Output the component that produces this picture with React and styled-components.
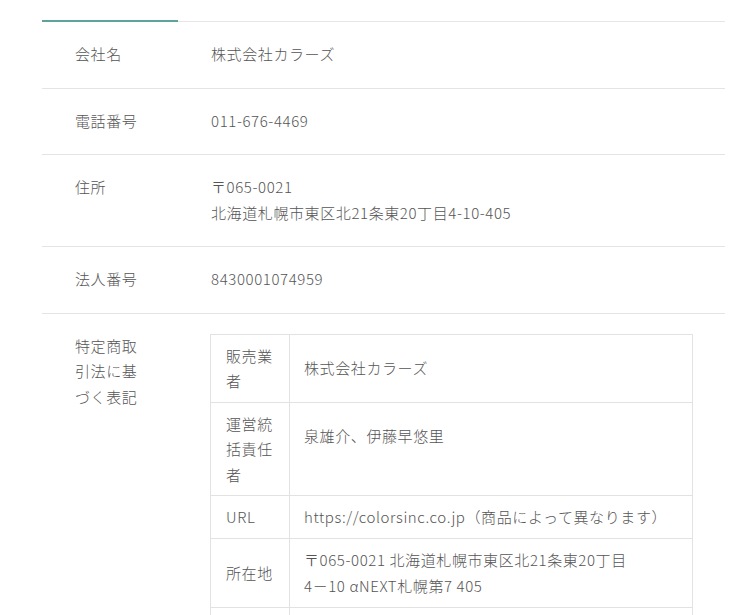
import React from "react";
import styled, { createGlobalStyle } from "styled-components";

const Global = createGlobalStyle`
  html, body { margin: 0; padding: 0; background: #fff; }
  body {
    font-family: "Noto Sans CJK JP", "Noto Sans", sans-serif;
    color: #555;
  }
`;

const Page = styled.div`
  padding: 20px 15px 0 42px;
  width: 683px;
`;

const TabLine = styled.div`
  display: flex;
  align-items: center;
  height: 2px;
`;

const Accent = styled.div`
  width: 136px;
  height: 2px;
  background: #5fa29a;
`;

const Rule = styled.div`
  flex: 1;
  height: 1px;
  background: #e6e6e6;
`;

const Row = styled.div`
  display: grid;
  grid-template-columns: 169px 1fr;
  border-bottom: 1px solid #e4e4e4;
  padding: 19px 0 21px;
  font-size: 15px;
  font-weight: 300;
  line-height: 25.5px;
  letter-spacing: 0.04em;
`;

const Label = styled.div`
  padding-left: 33px;
  width: 66px;
  color: #555;
`;

const Value = styled.div`
  color: #555;
  padding-right: 31px;
`;

const SubTable = styled.table`
  border-collapse: collapse;
  width: 100%;
  margin-left: -1px;
  margin-top: 1px;
  font-size: 15px;
  font-weight: 300;
  line-height: 25.5px;
  letter-spacing: 0.04em;
  color: #555;
`;

const SubHead = styled.th`
  font-weight: 300;
  text-align: left;
  width: 48px;
  padding: 8px 15px;
  border: 1px solid #e2e2e2;
  vertical-align: middle;
`;

const SubCell = styled.td`
  padding: 8px 14px 8.5px;
  border: 1px solid #e2e2e2;
  vertical-align: middle;
  white-space: ${(p) => (p.$nowrap ? "nowrap" : "normal")};
`;

const rows = [
  { label: "会社名", value: "株式会社カラーズ" },
  { label: "電話番号", value: "011-676-4469" },
  { label: "住所", value: ["〒065-0021", "北海道札幌市東区北21条東20丁目4-10-405"] },
  { label: "法人番号", value: "8430001074959" },
];

const sub = [
  { k: "販売業者", v: ["株式会社カラーズ"] },
  { k: "運営統括責任者", v: ["泉雄介、伊藤早悠里"], tall: true },
  { k: "URL", v: ["https://colorsinc.co.jp（商品によって異なります）"], nowrap: true },
  { k: "所在地", v: ["〒065-0021 北海道札幌市東区北21条東20丁目", "4－10 αNEXT札幌第7 405"] },
  { k: "電話番号", v: ["011-676-4469", "（受付時間 平日10:00〜17:00）"] },
];

const Lines = ({ v }) =>
  Array.isArray(v)
    ? v.map((l, i) => (
        <React.Fragment key={i}>
          {i > 0 && <br />}
          {l}
        </React.Fragment>
      ))
    : v;

export default function App() {
  return (
    <>
      <Global />
      <Page>
        <TabLine>
          <Accent />
          <Rule />
        </TabLine>
        {rows.map((r) => (
          <Row key={r.label}>
            <Label>{r.label}</Label>
            <Value>
              <Lines v={r.value} />
            </Value>
          </Row>
        ))}
        <Row>
          <Label>特定商取引法に基づく表記</Label>
          <Value>
            <SubTable>
              <tbody>
                {sub.map((s) => (
                  <tr key={s.k}>
                    <SubHead>{s.k}</SubHead>
                    <SubCell $nowrap={s.nowrap}>
                      {s.tall ? (
                        <>
                          {s.v[0]}
                          <br />
                          <br />
                        </>
                      ) : (
                        <Lines v={s.v} />
                      )}
                    </SubCell>
                  </tr>
                ))}
              </tbody>
            </SubTable>
          </Value>
        </Row>
      </Page>
    </>
  );
}
